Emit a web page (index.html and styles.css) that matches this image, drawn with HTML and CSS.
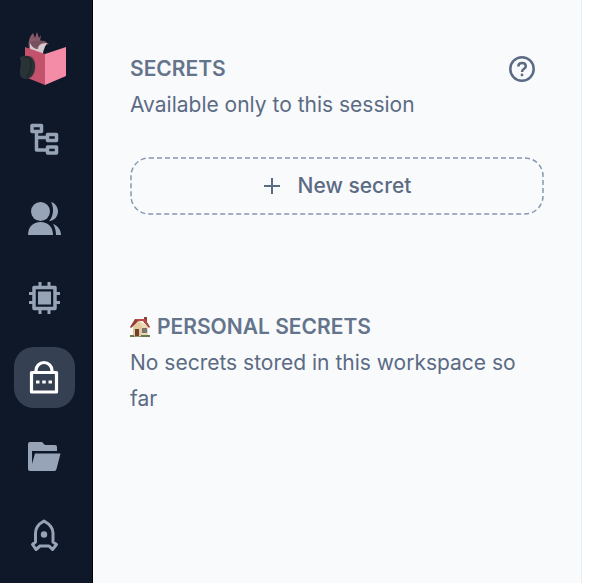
FILE: index.html
```html
<!DOCTYPE html>
<html lang="en">
<head>
    <meta charset="UTF-8">
    <meta name="viewport" content="width=device-width, initial-scale=1.0">
    <title>Secrets</title>
    <link rel="stylesheet" href="styles.css">
</head>
<body>
    <nav class="sidebar">
        <a href="#" class="logo" aria-label="Home">
            <svg width="50" height="56" viewBox="1 1 50 56">
                <path d="M11 21C8 14 10 7 14 3l2 5 2-6 2 6 2-3-1 6c4 0 6 1 9 3-5 1-8 4-7 10l-4 2z" fill="#87586a"/>
                <path d="M11 12c2 6 5 7 8 7 0-3 2-6 9-6-3 5-4 9-5 14l-12-6z" fill="#d5c9cf"/>
                <path d="M11 12c1 4 4 6 8 5 1-3 3-5 9-4-1-3-8-3-10-2z" fill="#76505f"/>
                <path d="M6 17l20 7v31L6 47z" fill="#c4526d"/>
                <path d="M26 24l21-7v29l-21 9z" fill="#f48ba7"/>
                <path d="M13 26c5 5 5 17-1 22l-4-1V26z" fill="#a5475f"/>
                <path d="M0 27c2 0 3-1 7-1 6 0 9 4 9 10 0 8-4 13-9 13-6 0-7-6-6-10 1-4 2-8-1-12z" fill="#293336"/>
                <path d="M5 28c4-3 7 0 7 7 0 6-2 10-5 12" fill="none" stroke="#202a2e" stroke-width="2"/>
            </svg>
        </a>
        <a href="#" class="nav-item" aria-label="Files">
            <svg class="icon" viewBox="0 0 41 41">
                <g fill="none" stroke="currentColor" stroke-width="3.500" stroke-linejoin="round">
                    <path d="M8 5.500h9.500v6H8zM23.500 14.500h9v6h-9zM23.500 27h9v6h-9z"/>
                    <path d="M12.500 12v18h11M12.500 17.500h11"/>
                </g>
            </svg>
        </a>
        <a href="#" class="nav-item" aria-label="Users">
            <svg class="icon" viewBox="0 0 41 41">
                <g fill="currentColor">
                    <circle cx="16.500" cy="12.500" r="9.500"/>
                    <path d="M4 36c0-8 5-13 12.500-13S29 28 29 36z"/>
                    <path d="M25 22c5-5 5-14 2-19 4 1 7 5 7 9.500 0 5-4 9.500-9 9.500z"/>
                    <path d="M29 25c5 2 8 6 8 11h-5c0-4-1-8-3-11z"/>
                </g>
            </svg>
        </a>
        <a href="#" class="nav-item" aria-label="Hardware">
            <svg class="icon" viewBox="0 0 41 41">
                <path d="M10 9.500h21v21H10z" fill="none" stroke="currentColor" stroke-width="3.500" stroke-linejoin="round"/>
                <path d="M14 13.500h13v13H14z" fill="currentColor"/>
                <path d="M16 4v5M25 4v5M16 31v5M25 31v5M5 15.500h5M5 24.500h5M31 15.500h5M31 24.500h5" stroke="currentColor" stroke-width="3"/>
            </svg>
        </a>
        <a href="#" class="nav-item active" aria-label="Secrets">
            <svg class="icon" viewBox="0 0 41 41">
                <path d="M7.500 15.500h25v19.500h-25z" fill="none" stroke="currentColor" stroke-width="3.200" stroke-linejoin="round"/>
                <path d="M12 15.500v-2a8 8 0 0 1 16 0v2" fill="none" stroke="currentColor" stroke-width="3.200"/>
                <path d="M12 23.500h3.500v3h-3.500zM18.250 23.500h3.500v3h-3.500zM24.500 23.500h3.500v3h-3.500z" fill="currentColor"/>
            </svg>
        </a>
        <a href="#" class="nav-item" aria-label="Storage">
            <svg class="icon" viewBox="0 0 41 41">
                <path d="M6 6h12l3 3h10q2 0 2 2v4H8v13l3-10.500h25.500l-4 15.500q-.5 2-2 2H6q-2 0-2-2V8q0-2 2-2z" fill="currentColor"/>
            </svg>
        </a>
        <a href="#" class="nav-item" aria-label="Deploy">
            <svg class="icon" viewBox="0 0 41 41">
                <path d="M11.500 27V18c0-5.500 4-9.500 8.500-12 4.500 2.500 9 6.500 9 12v9l3.500 2.500-4 5-3.500-3.500H16l-4 3.500-3.500-5z" fill="none" stroke="currentColor" stroke-width="3" stroke-linejoin="round"/>
                <circle cx="20" cy="19.500" r="3.200" fill="currentColor"/>
            </svg>
        </a>
    </nav>

    <main class="panel">
        <section>
            <div class="panel-header">
                <h1 class="heading">SECRETS</h1>
                <button class="help-button" aria-label="Help">
                    <svg width="28" height="28" viewBox="0 0 28 28" fill="none" stroke="currentColor" stroke-width="2.500">
                        <circle cx="14" cy="14" r="11.700"/>
                        <path d="M10.300 11.500C10.300 9 12 8 14 8c2.200 0 3.800 1.200 3.800 3.200C17.800 14 14 13.700 14 17"/>
                        <circle cx="14" cy="20" r="1.400" fill="currentColor" stroke="none"/>
                    </svg>
                </button>
            </div>
            <p class="text">Available only to this session</p>
            <button class="new-button">
                <svg class="dashes" aria-hidden="true">
                    <rect width="100%" height="100%" rx="18"/>
                </svg>
                <svg width="18" height="18" viewBox="0 0 18 18">
                    <path d="M9 1v16M1 9h16" stroke="currentColor" stroke-width="2"/>
                </svg>
                New secret
            </button>
        </section>

        <section class="personal">
            <h2 class="heading">
                <svg width="21" height="21" viewBox="0 0 21 21">
                    <path d="M3 9l5-6 10 6v10H3z" fill="#ecd9b8"/>
                    <path d="M14 0h3v6h-3z" fill="#8e463c"/>
                    <path d="M0 10l5-8h10l5 8-1 1-6-7-4 0-8 7z" fill="#963c36"/>
                    <path d="M6 2h9l4 7-6-5-5 0z" fill="#b84b42"/>
                    <path d="M3 10l5-6 4 5v10H3z" fill="#e2caa2"/>
                    <path d="M5 12h4v7H5z" fill="#70402c"/>
                    <path d="M12.500 11.500h4v4h-4z" fill="#5f8298" stroke="#8d684d"/>
                    <path d="M0 18h4v2H0zM11 18h9v2h-9z" fill="#667d4b"/>
                    <path d="M4 19h7v1H4z" fill="#9a8d7e"/>
                </svg>
                PERSONAL SECRETS
            </h2>
            <p class="text">No secrets stored in this workspace so far</p>
        </section>
    </main>
</body>
</html>
```
FILE: styles.css
```css
* {
    box-sizing: border-box;
}

body {
    margin: 0;
    display: flex;
    min-height: 100vh;
    background-color: #ffffff;
    color: #5b6b84;
    font-family: Inter, Arial, sans-serif;
    font-size: 21px;
    line-height: 36px;
}

button {
    font: inherit;
    color: inherit;
    background: none;
    border: none;
    padding: 0;
    cursor: pointer;
}

svg {
    display: block;
    flex-shrink: 0;
}

.sidebar {
    display: flex;
    flex-direction: column;
    gap: 18px;
    flex-shrink: 0;
    padding: 31px 17px 17px 14px;
    background-color: #0f1828;
    border-right: 1px solid #000000;
}

.logo {
    display: flex;
    justify-content: center;
    height: 61px;
}

.nav-item {
    display: flex;
    align-items: center;
    justify-content: center;
    width: 61px;
    height: 61px;
    border-radius: 20px;
    color: #97a4b7;
}

.nav-item:hover {
    color: #ffffff;
}

.nav-item.active {
    background-color: #354153;
    color: #ffffff;
}

.icon {
    width: 41px;
    height: 41px;
}

.panel {
    flex: 1;
    margin-right: 18px;
    padding: 51px 37px;
    background-color: #f9fafc;
    border-right: 1px solid #e8ecf2;
}

.panel-header {
    display: flex;
    align-items: center;
    justify-content: space-between;
    padding-right: 8px;
}

.heading {
    display: flex;
    align-items: center;
    gap: 6px;
    margin: 0;
    font-size: 21px;
    font-weight: 600;
    color: #64748b;
}

.text {
    margin: 0;
}

.new-button {
    position: relative;
    display: flex;
    align-items: center;
    justify-content: center;
    gap: 17px;
    width: 100%;
    height: 58px;
    margin-top: 34px;
    border-radius: 18px;
    font-weight: 500;
}

.new-button:hover {
    background-color: #eef2f7;
}

/* dashed outline, longer dashes than a dashed border gives */
.dashes {
    position: absolute;
    inset: 0;
    width: 100%;
    height: 100%;
    padding: 1px;
    overflow: visible;
    fill: none;
    stroke: #8598b0;
    stroke-width: 1.5px;
    stroke-dasharray: 5 3;
}

.personal {
    margin-top: 94px;
}
```
